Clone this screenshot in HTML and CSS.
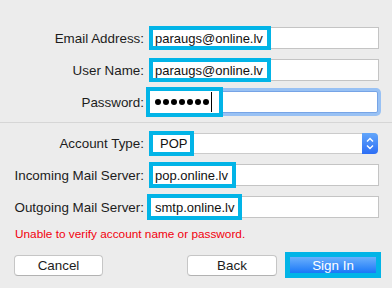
FILE: index.html
```html
<!DOCTYPE html>
<html lang="en">
<head>
  <meta charset="UTF-8">
  <title>Add Account</title>
  <link rel="stylesheet" href="styles.css">
</head>
<body>
  <div class="sheet">
    <div class="row">
      <label class="label">Email Address:</label>
      <div class="field"><span class="mark">paraugs@online.lv</span></div>
    </div>
    <div class="row">
      <label class="label">User Name:</label>
      <div class="field"><span class="mark">paraugs@online.lv</span></div>
    </div>
    <div class="row">
      <label class="label">Password:</label>
      <div class="field field-focus">
        <span class="mark mark-pass">
          <span class="dot"></span><span class="dot"></span><span class="dot"></span><span class="dot"></span><span class="dot"></span><span class="dot"></span><span class="dot"></span>
          <span class="caret"></span>
        </span>
      </div>
    </div>

    <div class="divider"></div>

    <div class="row row-popup">
      <label class="label">Account Type:</label>
      <div class="field field-popup">
        <span class="mark mark-pop">POP</span>
        <span class="stepper">
          <svg width="16" height="21" viewBox="0 0 16 21">
            <path d="M5 8.5 L8 5.5 L11 8.5" fill="none" stroke="#fff" stroke-width="1.4"/>
            <path d="M5 12.5 L8 15.5 L11 12.5" fill="none" stroke="#fff" stroke-width="1.4"/>
          </svg>
        </span>
      </div>
    </div>
    <div class="row">
      <label class="label">Incoming Mail Server:</label>
      <div class="field"><span class="mark mark-tall">pop.online.lv</span></div>
    </div>
    <div class="row">
      <label class="label">Outgoing Mail Server:</label>
      <div class="field"><span class="mark mark-tall mark-out">smtp.online.lv</span></div>
    </div>

    <p class="error">Unable to verify account name or password.</p>

    <div class="actions">
      <button class="btn btn-cancel">Cancel</button>
      <button class="btn btn-back">Back</button>
      <span class="mark mark-btn"><button class="btn btn-primary">Sign In</button></span>
    </div>
  </div>
</body>
</html>
```

FILE: styles.css
```css
* {
  margin: 0;
  padding: 0;
  box-sizing: border-box;
}

body {
  background: #ececec;
  font-family: "Liberation Sans", Arial, sans-serif;
  font-size: 13px;
  color: #1c1c1c;
}

.sheet {
  padding-top: 27px;
}

.row {
  display: grid;
  grid-template-columns: 144px 229px;
  column-gap: 6px;
  height: 22px;
  margin-bottom: 10px;
  align-items: center;
}

.row-popup {
  height: 21px;
}

.label {
  text-align: right;
  white-space: nowrap;
  font-size: 13.4px;
}

.field {
  height: 22px;
  background: #fff;
  border: 1px solid #c4c4c4;
  display: flex;
  align-items: center;
}

.field-focus {
  border-color: #76a4e6;
  border-radius: 2px;
  box-shadow: 0 0 0 3px #98c1f4;
  width: 228px;
}

.field-popup {
  height: 21px;
  width: 228px;
  border-color: #cbcbcb;
  border-radius: 4px;
  justify-content: space-between;
}

/* cyan highlight around the filled-in values */
.mark {
  display: inline-flex;
  align-items: center;
  height: 24px;
  margin-left: -2px;
  padding: 0 4px 0 2px;
  border: 4px solid #02b4e7;
  background: #fff;
  color: #111;
  white-space: nowrap;
}

.mark-tall {
  height: 26px;
}

.mark-out {
  margin-left: -4px;
  padding-left: 4px;
}

.mark-pass {
  height: 30px;
  margin-left: -5px;
  padding: 0 7px 0 5px;
  gap: 2px;
}

.dot {
  width: 6px;
  height: 6px;
  border-radius: 50%;
  background: #000;
}

.caret {
  width: 1px;
  height: 20px;
  background: #000;
}

.mark-pop {
  height: 25px;
  padding: 0 3px 0 7px;
}

.stepper {
  width: 16px;
  height: 21px;
  margin: -1px -1px -1px 0;
  border-radius: 0 4px 4px 0;
  background: linear-gradient(#62a6fa, #2d6ef5);
  display: flex;
}

.divider {
  height: 1px;
  background: #d6d6d6;
  margin: -1px 0 10px;
}

.error {
  color: #f2000d;
  font-size: 11.8px;
  line-height: 13px;
  padding-left: 15px;
  margin-top: 10px;
}

.actions {
  display: flex;
  align-items: center;
  padding-left: 14px;
  margin-top: 11px;
  height: 26px;
}

.btn {
  font-family: inherit;
  font-size: 13.4px;
  height: 21px;
  border-radius: 4px;
  border: 1px solid #c6c6c6;
  border-bottom-color: #b2b2b2;
  background: #fff;
  color: #1c1c1c;
  cursor: pointer;
}

.btn-cancel {
  width: 89px;
}

.btn-back {
  width: 90px;
  margin-left: 84px;
}

.mark-btn {
  height: 26px;
  width: 96px;
  margin-left: 8px;
  padding: 0;
  border-width: 5px;
}

.btn-primary {
  width: 100%;
  height: 16px;
  border: none;
  border-radius: 0;
  background: linear-gradient(#6bb0fc, #1a78f8);
  color: #fff;
}
```
